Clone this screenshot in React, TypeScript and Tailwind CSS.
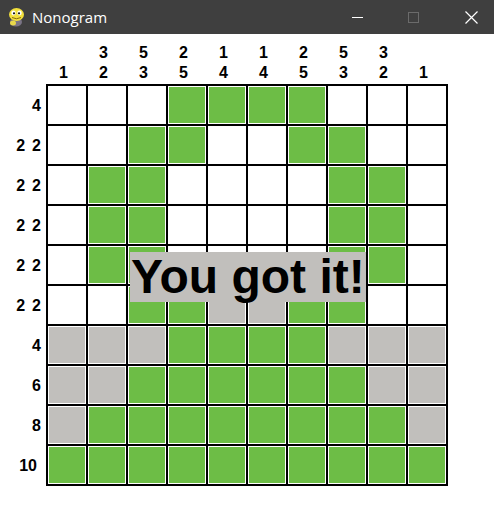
const G = "g";
const W = "w";
const X = "x";

const board: string[][] = [
  [W, W, W, G, G, G, G, W, W, W],
  [W, W, G, G, W, W, G, G, W, W],
  [W, G, G, W, W, W, W, G, G, W],
  [W, G, G, W, W, W, W, G, G, W],
  [W, G, G, W, W, W, W, G, G, W],
  [W, W, G, G, X, X, G, G, W, W],
  [X, X, X, G, G, G, G, X, X, X],
  [X, X, G, G, G, G, G, G, X, X],
  [X, G, G, G, G, G, G, G, G, X],
  [G, G, G, G, G, G, G, G, G, G],
];

const colClues = [[1], [3, 2], [5, 3], [2, 5], [1, 4], [1, 4], [2, 5], [5, 3], [3, 2], [1]];
const rowClues = [[4], [2, 2], [2, 2], [2, 2], [2, 2], [2, 2], [4], [6], [8], [10]];

function SnakeIcon() {
  return (
    <svg width="18" height="21" viewBox="0 0 18 21">
      <ellipse cx="9" cy="15" rx="6" ry="4.5" fill="#7a7485" />
      <ellipse cx="6" cy="16" rx="3" ry="2.5" fill="#e8d84a" />
      <ellipse cx="9.5" cy="7.5" rx="7.5" ry="6.5" fill="#f2e03c" />
      <ellipse cx="6.5" cy="6" rx="2.2" ry="2.4" fill="#fff" />
      <ellipse cx="12.5" cy="6" rx="2.2" ry="2.4" fill="#fff" />
      <circle cx="7" cy="6.3" r="1.1" fill="#111" />
      <circle cx="12" cy="6.3" r="1.1" fill="#111" />
      <path d="M5 10.5 Q9.5 13 14 10.5" stroke="#8a6a10" strokeWidth="1" fill="none" />
    </svg>
  );
}

function TitleBar() {
  return (
    <div className="flex h-[34px] items-center bg-[#3f3f3f] text-white">
      <div className="ml-[7px] flex w-[18px] items-center">
        <SnakeIcon />
      </div>
      <span className="ml-[7px] text-[15px] font-['Open_Sans',sans-serif] leading-none">Nonogram</span>
      <div className="ml-auto flex h-full items-center">
        <div className="flex h-full w-[46px] items-center justify-center">
          <div className="h-px w-[11px] bg-white" />
        </div>
        <div className="ml-[10px] flex h-full w-[46px] items-center justify-center">
          <div className="h-[11px] w-[11px] border border-[#6b6b6b]" />
        </div>
        <div className="ml-[12px] flex h-full w-[46px] items-center justify-center">
          <svg width="13" height="13" viewBox="0 0 13 13">
            <path d="M0.5 0.5 L12.5 12.5 M12.5 0.5 L0.5 12.5" stroke="#fff" strokeWidth="1.2" />
          </svg>
        </div>
      </div>
    </div>
  );
}

export default function App() {
  return (
    <div className="relative h-[532px] w-[494px] bg-white font-['Liberation_Sans',Arial,sans-serif] text-black">
      <TitleBar />

      <div className="ml-[46px] flex h-[50px]">
        {colClues.map((c, i) => (
          <div key={i} className="flex w-[40px] flex-col justify-end pb-[1px] pr-[5px] text-center text-[16px] font-bold">
            {c.map((n, j) => (
              <div key={j} className="h-[20px] leading-[20px]">
                {n}
              </div>
            ))}
          </div>
        ))}
      </div>

      <div className="flex">
        <div className="flex w-[46px] flex-col pt-[2px]">
          {rowClues.map((r, i) => (
            <div
              key={i}
              className={
                "flex h-[40px] items-center justify-end gap-[7px] text-[16px] font-bold " +
                (r[0] === 10 ? "pr-[9px]" : "pr-[5px]")
              }
            >
              {r.map((n, j) => (
                <span key={j}>{n}</span>
              ))}
            </div>
          ))}
        </div>

        <div className="grid grid-cols-[repeat(10,38px)] gap-[2px] bg-black p-[2px]">
          {board.flat().map((v, i) => (
            <div key={i} className="h-[38px] w-[38px] bg-white p-[1px]">
              {v === G && <div className="h-full w-full bg-[#6dbd46]" />}
              {v === X && <div className="h-full w-full bg-[#c1bfbc]" />}
            </div>
          ))}
        </div>
      </div>

      <div className="absolute left-[130px] top-[252px] bg-[#c1bfbc] px-[1px] text-[48px] font-bold leading-[50px] whitespace-nowrap">
        You got it!
      </div>
    </div>
  );
}
